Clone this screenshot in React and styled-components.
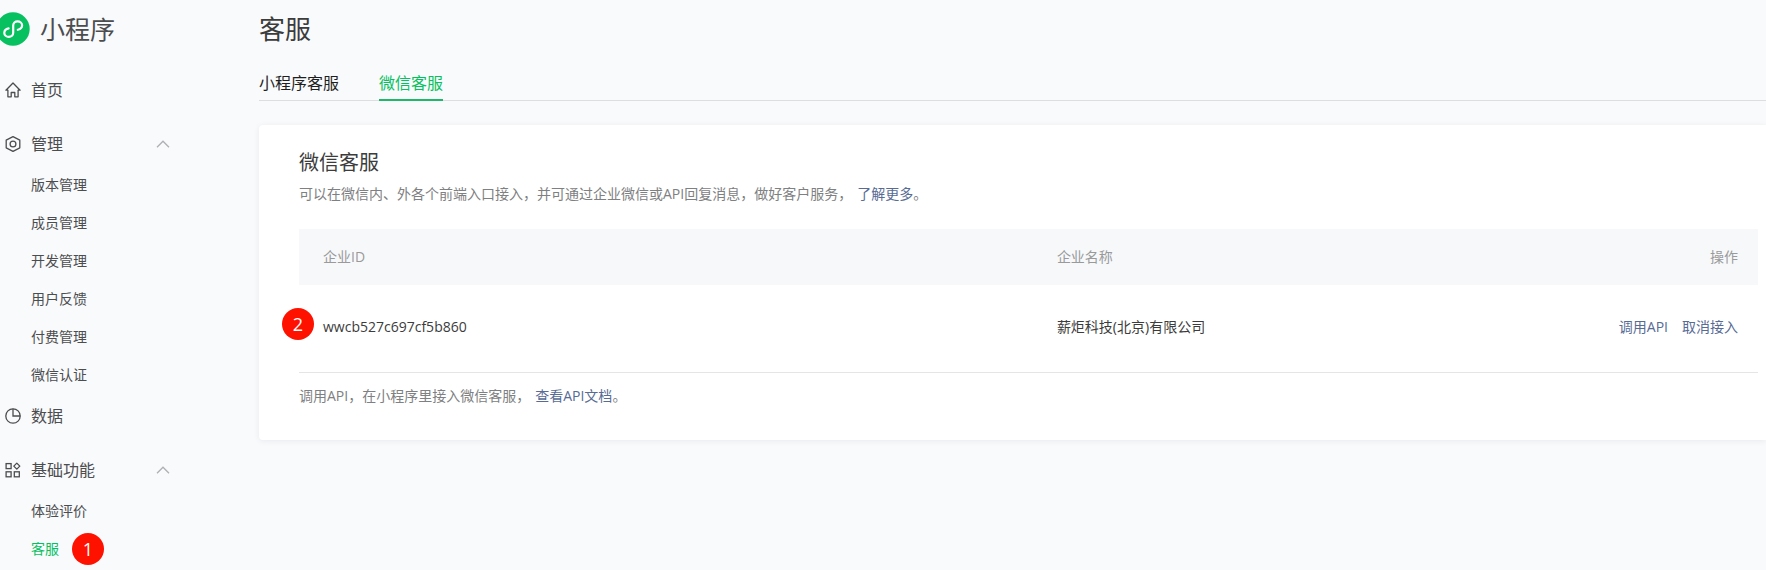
import React from "react";
import styled, { createGlobalStyle } from "styled-components";

const GlobalStyle = createGlobalStyle`
  * { box-sizing: border-box; }
  body {
    margin: 0;
    background: #f9fafc;
    color: #3c3c3c;
    font-family: "Open Sans", "Noto Sans CJK SC", sans-serif;
    font-size: 14px;
    line-height: 20px;
  }
  a { text-decoration: none; }
`;

const Page = styled.div`
  display: flex;
  align-items: flex-start;
`;

const Sidebar = styled.aside`
  flex: 0 0 259px;
  padding-top: 8px;
`;

const Brand = styled.a`
  display: flex;
  align-items: center;
  gap: 10px;
  height: 42px;
  margin-bottom: 18px;
  color: #4c4d4f;
  font-size: 25px;
  line-height: 42px;
`;

const Nav = styled.nav`
  width: 170px;
  padding-left: 5px;
`;

const NavLink = styled.a`
  display: flex;
  align-items: center;
  gap: 10px;
  height: 44px;
  margin-bottom: 10px;
  color: #4c4d4f;
  font-size: 16px;
`;

const GroupButton = styled.button`
  display: flex;
  align-items: center;
  gap: 10px;
  width: 100%;
  height: 44px;
  padding: 0;
  border: 0;
  background: none;
  color: #4c4d4f;
  font: inherit;
  font-size: 16px;
  text-align: left;
  cursor: pointer;

  svg:last-child { margin-left: auto; }
`;

const SubList = styled.ul`
  margin: 0;
  padding: 0 0 0 26px;
  list-style: none;
`;

const SubItem = styled.li`
  display: flex;
  align-items: center;
  gap: 13px;
  height: 38px;
`;

const SubLink = styled.a`
  color: ${(p) => (p.$active ? "#07c160" : "#4c4d4f")};
`;

const Badge = styled.span`
  display: flex;
  align-items: center;
  justify-content: center;
  width: 32px;
  height: 32px;
  border-radius: 50%;
  background: #ff1100;
  color: #fff;
  font-size: 18px;
`;

const RowBadge = styled(Badge)`
  position: absolute;
  left: -17px;
  top: 23px;
`;

const Main = styled.main`
  flex: 1;
  min-width: 0;
`;

const PageTitle = styled.h1`
  margin: 0;
  padding-top: 10px;
  font-size: 26px;
  font-weight: 400;
  line-height: 38px;
`;

const Tabs = styled.div`
  display: flex;
  gap: 40px;
  margin: 18px 0 24px;
  border-bottom: 1px solid #dcdee2;
`;

const Tab = styled.button`
  height: 35px;
  margin-bottom: -1px;
  padding: 1px 0 0;
  border: 0;
  border-bottom: 2px solid ${(p) => (p.$active ? "#1fb76c" : "transparent")};
  background: none;
  color: ${(p) => (p.$active ? "#07c160" : "#1f1f1f")};
  font: inherit;
  font-size: 16px;
  cursor: pointer;
`;

const Card = styled.section`
  padding: 23px 8px 34px 40px;
  border-radius: 4px 0 0 4px;
  background: #fff;
  box-shadow: 0 1px 6px rgba(0, 20, 40, 0.07);
`;

const CardTitle = styled.h2`
  margin: 0;
  font-size: 20px;
  font-weight: 400;
  line-height: 30px;
`;

const Note = styled.p`
  margin: 0;
  padding: ${(p) => (p.$footer ? "13px 0 0" : "6px 0 25px")};
  color: #7e8081;
`;

const TextLink = styled.a`
  color: #576b95;
`;

const InlineLink = styled(TextLink)`
  margin-left: 5px;
`;

const Table = styled.table`
  width: 100%;
  table-layout: fixed;
  border-collapse: separate;
  border-spacing: 0;
`;

const HeadCell = styled.th`
  width: ${(p) => p.$width || "auto"};
  height: 56px;
  padding: 0 20px 0 24px;
  background: #f6f8fa;
  color: #9a9a9a;
  font-weight: 400;
  text-align: ${(p) => (p.$end ? "right" : "left")};
`;

const Cell = styled.td`
  position: relative;
  height: 88px;
  padding: 0 20px 4px 24px;
  border-bottom: 1px solid #e4e5e7;
  text-align: ${(p) => (p.$end ? "right" : "left")};
`;

const Actions = styled.div`
  display: flex;
  justify-content: flex-end;
  gap: 14px;
`;

const LogoIcon = () => (
  <svg width="30" height="34" viewBox="0 0 30 34" fill="none" aria-hidden="true">
    <circle cx="13" cy="17" r="16.7" fill="#07c160" />
    <path
      d="M8.6 16.4C6 17 4.3 18.8 4.3 20.9c0 2.3 2 3.9 4.5 3.9s4.4-1.700 4.400-4.100v-7.200c0-2.400 1.900-4.100 4.400-4.100s4.500 1.600 4.500 3.900c0 2.100-1.700 3.900-4.300 4.500"
      stroke="#fff"
      strokeWidth="2.2"
      strokeLinecap="round"
    />
  </svg>
);

const NavIcon = ({ children }) => (
  <svg width="16" height="16" viewBox="0 0 16 16" fill="none" stroke="#4c4d4f" strokeWidth="1.3" aria-hidden="true">
    {children}
  </svg>
);

const HomeIcon = () => (
  <NavIcon>
    <path d="M2.9 8.2H.9L8 1l7.1 7.2h-2v6.6H9.8v-4.300H6.2v4.300H2.9z" strokeLinejoin="round" />
  </NavIcon>
);

const ManageIcon = () => (
  <NavIcon>
    <path d="M8 .7l6.8 3.500v7.600L8 15.3l-6.800-3.500V4.2z" strokeLinejoin="round" />
    <circle cx="8" cy="8" r="2.9" />
  </NavIcon>
);

const DataIcon = () => (
  <NavIcon>
    <circle cx="8" cy="8" r="7.2" />
    <path d="M8 .8V8h7.200" />
  </NavIcon>
);

const FeatureIcon = () => (
  <NavIcon>
    <rect x="1.1" y="1.6" width="5" height="5" />
    <rect x="1.1" y="9.8" width="5" height="5" />
    <rect x="9.3" y="9.8" width="5" height="5" />
    <path d="M11.8 1.100L14.800 4.100l-3 3-3-3z" strokeLinejoin="round" />
  </NavIcon>
);

const Chevron = () => (
  <svg width="14" height="8" viewBox="0 0 14 8" fill="none" stroke="#aeb0b3" strokeWidth="1.3" aria-hidden="true">
    <path d="M1 7.200l6-6 6 6" />
  </svg>
);

const manageItems = ["版本管理", "成员管理", "开发管理", "用户反馈", "付费管理", "微信认证"];

const companies = [{ id: "wwcb527c697cf5b860", name: "薪炬科技(北京)有限公司" }];

export default function App() {
  return (
    <>
      <GlobalStyle />
      <Page>
        <Sidebar>
          <Brand href="#">
            <LogoIcon />
            小程序
          </Brand>
          <Nav>
            <NavLink href="#">
              <HomeIcon />
              首页
            </NavLink>
            <GroupButton type="button" aria-expanded="true">
              <ManageIcon />
              管理
              <Chevron />
            </GroupButton>
            <SubList>
              {manageItems.map((label) => (
                <SubItem key={label}>
                  <SubLink href="#">{label}</SubLink>
                </SubItem>
              ))}
            </SubList>
            <NavLink href="#">
              <DataIcon />
              数据
            </NavLink>
            <GroupButton type="button" aria-expanded="true">
              <FeatureIcon />
              基础功能
              <Chevron />
            </GroupButton>
            <SubList>
              <SubItem>
                <SubLink href="#">体验评价</SubLink>
              </SubItem>
              <SubItem>
                <SubLink href="#" $active aria-current="page">
                  客服
                </SubLink>
                <Badge>1</Badge>
              </SubItem>
            </SubList>
          </Nav>
        </Sidebar>

        <Main>
          <PageTitle>客服</PageTitle>
          <Tabs role="tablist">
            <Tab type="button" role="tab" aria-selected="false">
              小程序客服
            </Tab>
            <Tab type="button" role="tab" aria-selected="true" $active>
              微信客服
            </Tab>
          </Tabs>

          <Card>
            <CardTitle>微信客服</CardTitle>
            <Note>
              可以在微信内、外各个前端入口接入，并可通过企业微信或API回复消息，做好客户服务，
              <InlineLink href="#">了解更多</InlineLink>。
            </Note>
            <Table>
              <thead>
                <tr>
                  <HeadCell scope="col" $width="50.3%">
                    企业ID
                  </HeadCell>
                  <HeadCell scope="col">企业名称</HeadCell>
                  <HeadCell scope="col" $end>
                    操作
                  </HeadCell>
                </tr>
              </thead>
              <tbody>
                {companies.map((company, index) => (
                  <tr key={company.id}>
                    <Cell>
                      <RowBadge>{index + 2}</RowBadge>
                      {company.id}
                    </Cell>
                    <Cell>{company.name}</Cell>
                    <Cell $end>
                      <Actions>
                        <TextLink href="#">调用API</TextLink>
                        <TextLink href="#">取消接入</TextLink>
                      </Actions>
                    </Cell>
                  </tr>
                ))}
              </tbody>
            </Table>
            <Note $footer>
              调用API，在小程序里接入微信客服，
              <InlineLink href="#">查看API文档</InlineLink>。
            </Note>
          </Card>
        </Main>
      </Page>
    </>
  );
}
